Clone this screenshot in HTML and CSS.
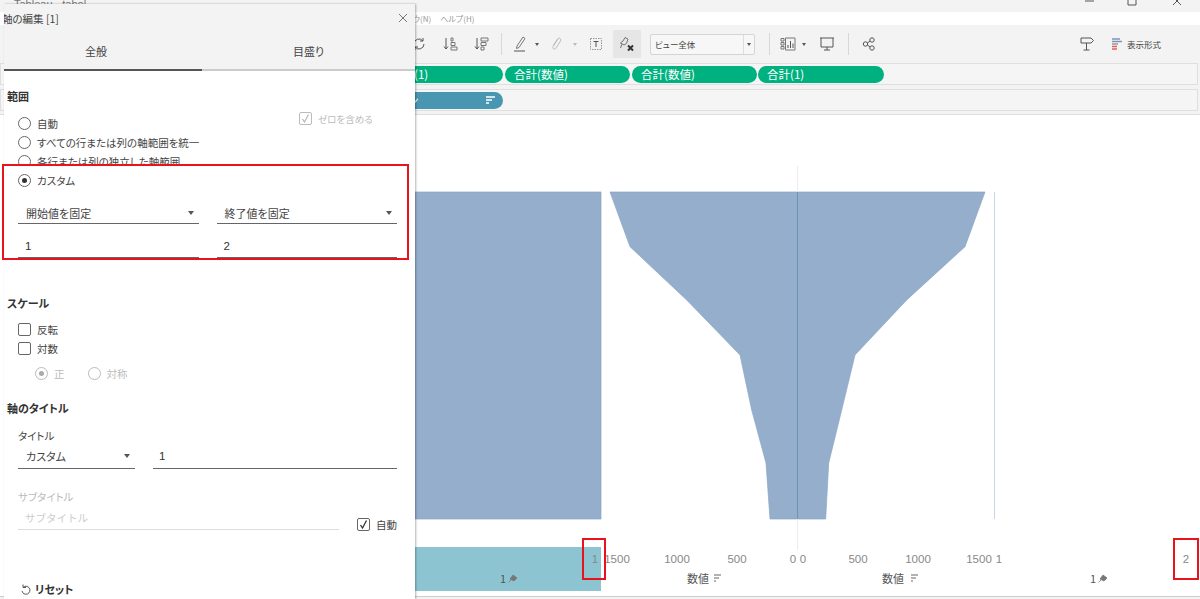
FILE: index.html
```html
<!DOCTYPE html>
<html lang="ja">
<head>
<meta charset="utf-8">
<title>Tableau</title>
<link rel="stylesheet" href="styles.css">
</head>
<body>
<div class="app">
  <div class="titlebar">
    <span class="apptitle">Tableau - tabol</span>
    <div class="winctl">
      <svg width="100" height="12" viewBox="0 0 100 12"><path d="M0 1H9" class="s"/><path d="M43 0V5H51V0M46 0V-2" class="s"/><path d="M88 -3L96 5M96 -3L88 5" class="s"/></svg>
    </div>
  </div>
  <div class="menubar"><span>ウィンドウ(N)</span><span>ヘルプ(H)</span></div>
  <div class="toolbar">
    <div class="t w31"><svg width="16" height="16" viewBox="0 0 16 16"><path d="M3 8A5 5 0 0 1 12 5M13 8A5 5 0 0 1 4 11M12 2V5H9M4 14V11H7" class="s"/></svg></div>
    <div class="t w31"><svg width="16" height="16" viewBox="0 0 16 16"><path d="M4 2V13M2 10.500L4 13L6 10.500" class="s"/><path d="M9 2H11V5H9ZM9 6.500H13V9.500H9ZM9 11H15V14H9Z" class="s thin"/></svg></div>
    <div class="t w31"><svg width="16" height="16" viewBox="0 0 16 16"><path d="M4 2V13M2 10.500L4 13L6 10.500" class="s"/><path d="M8 2H15V5H8ZM8 6.500H13V9.500H8ZM8 11H11V14H8Z" class="s thin"/></svg></div>
    <div class="sep"></div>
    <div class="t w28"><svg width="16" height="18" viewBox="0 0 16 18"><path d="M5 11L11 2L13 3.500L7 12.500L4.500 13.500Z" class="s thin"/><path d="M2 16H13" class="s"/></svg></div>
    <div class="t w6"><span class="caret"></span></div>
    <div class="t w32"><svg width="14" height="16" viewBox="0 0 14 16"><path d="M9 3L4 10.500C3 13 6 14 7 12L11.500 5C12.500 2.500 10 1 8.500 3L4.500 9" class="s faint"/></svg></div>
    <div class="t w6"><span class="caret faintcaret"></span></div>
    <div class="t w35"><svg width="14" height="14" viewBox="0 0 14 14"><rect x="1.500" y="1.500" width="11" height="11" class="s dotted"/><path d="M4.500 4.500H9.500M7 4.500V10" class="s"/></svg></div>
    <div class="t w28 active"><svg width="16" height="16" viewBox="0 0 16 16"><path d="M6 1.500L9 3L7.500 7.500L5 9L1.500 7L4 5ZM3 8L1.500 12" class="s thin"/><path d="M9 9.500L14 14.500M14 9.500L9 14.500" class="s xmark"/></svg></div>
    <div class="viewselect"><span class="vs-text">ビュー全体</span><span class="vs-btn"><span class="caret"></span></span></div>
    <div class="sep"></div>
    <div class="t w27"><svg width="16" height="14" viewBox="0 0 16 14"><path d="M1 1.500H4V4H1ZM1 5.500H4V8H1ZM1 9.500H4V12H1Z" class="s thin"/><path d="M5.500 1H15V13H5.500Z" class="s thin"/><path d="M8 11V8M10.500 11V4M13 11V6.500" class="s"/></svg></div>
    <div class="t w6"><span class="caret"></span></div>
    <div class="t w36"><svg width="16" height="16" viewBox="0 0 16 16"><path d="M1 2H15M2 2V11H14V2M8 11V14M5 14H11" class="s"/></svg></div>
    <div class="sep"></div>
    <div class="t w32"><svg width="14" height="14" viewBox="0 0 14 14"><circle cx="3.500" cy="7" r="2.200" class="s"/><circle cx="10" cy="3" r="2.200" class="s"/><circle cx="10" cy="11" r="2.200" class="s"/><path d="M5.500 6L8 4M5.500 8L8 10" class="s"/></svg></div>
    <div class="grow"></div>
    <div class="t w24"><svg width="16" height="16" viewBox="0 0 16 16"><path d="M2 2H12L14.500 4.500L12 7H2ZM7.500 7V14M4.500 14H10.500" class="s"/></svg></div>
    <div class="fmt">
      <svg width="10" height="12" viewBox="0 0 10 12"><path d="M0 1H8" class="f1"/><path d="M0 3.500H10" class="f1"/><path d="M0 6H6" class="f2"/><path d="M0 8.500H5" class="f3"/><path d="M0 11H5" class="f3"/></svg>
      <span>表示形式</span>
    </div>
  </div>
  <div class="shelf">
    <span class="pill p1">合計(1)</span>
    <span class="pill p2">合計(数値)</span>
    <span class="pill p3">合計(数値)</span>
    <span class="pill p4">合計(1)</span>
  </div>
  <div class="shelf second">
    <span class="pill blue"><span>ン</span>
      <svg width="10" height="9" viewBox="0 0 10 9"><path d="M0 1H9M0 4H6M0 7H3" class="w"/></svg>
    </span>
  </div>
  <div class="view">
    <svg class="chart" width="1200" height="482" viewBox="0 115 1200 482">
      <rect x="415" y="192" width="186" height="327" class="mark"/>
      <path d="M610 192L630 246.700L686.700 300L740 355L751.700 410L766 463L770 519H825.700L828.700 463L841.700 410L855 355L906.700 300L965 246.700L985 192Z" class="mark"/>
      <path d="M797.500 166V550" class="zero"/>
      <path d="M797.500 192V519" class="zerodark"/>
      <path d="M994.500 192V519" class="edge"/>
      <rect x="415" y="547" width="186" height="44" class="band"/>
      <g class="ticks">
        <text x="595" y="563">1</text>
        <text x="617" y="563">1500</text>
        <text x="677" y="563">1000</text>
        <text x="737" y="563">500</text>
        <text x="793" y="563">0</text>
        <text x="803" y="563">0</text>
        <text x="858" y="563">500</text>
        <text x="918" y="563">1000</text>
        <text x="979" y="563">1500</text>
        <text x="999" y="563">1</text>
        <text x="1186" y="563">2</text>
      </g>
      <g class="axt">
        <text x="503" y="583">1</text>
        <text x="698" y="583">数値</text>
        <text x="893" y="583">数値</text>
        <text x="1093" y="583">1</text>
      </g>
      <path d="M513 575L517 578L514 581L510 579ZM511 580L508.500 582.500" class="pin"/>
      <path d="M1103 575L1107 578L1104 581L1100 579ZM1101 580L1098.500 582.500" class="pin"/>
      <path d="M714 575H721M714 578H719M714 581H716" class="sortm"/>
      <path d="M911 575H918M911 578H916M911 581H913" class="sortm"/>
    </svg>
    <div class="redbox rb1"></div>
    <div class="redbox rb2"></div>
  </div>
</div>

<aside class="dialog">
  <div class="dlg-title">
    <span class="dlg-name">軸の編集 [1]</span>
    <svg width="10" height="10" viewBox="0 0 10 10"><path d="M1 1L9 9M9 1L1 9" class="x"/></svg>
  </div>
  <div class="tabs">
    <div class="tab on">全般</div>
    <div class="tab">目盛り</div>
  </div>
  <div class="dlg-body">
    <h3 class="head first">範囲</h3>
    <div class="pad radios">
      <div class="row between">
        <label class="opt"><span class="radio"></span>自動</label>
        <label class="opt off zero-opt"><span class="box"><svg width="11" height="11" viewBox="0 0 11 11"><path d="M2.500 6L4.500 9L8.500 1.500" class="chk g"/></svg></span>ゼロを含める</label>
      </div>
      <label class="opt"><span class="radio"></span>すべての行または列の軸範囲を統一</label>
      <label class="opt"><span class="radio"></span>各行または列の独立した軸範囲</label>
    </div>
    <div class="custom">
      <label class="opt"><span class="radio sel"></span>カスタム</label>
      <div class="fields f1row">
        <div class="select"><span>開始値を固定</span><i class="arrow"></i></div>
        <div class="select"><span>終了値を固定</span><i class="arrow"></i></div>
      </div>
      <div class="fields f2row">
        <div class="input">1</div>
        <div class="input">2</div>
      </div>
    </div>

    <h3 class="head scale">スケール</h3>
    <div class="pad checks">
      <label class="opt"><span class="box"></span>反転</label>
      <label class="opt"><span class="box"></span>対数</label>
    </div>
    <div class="pad logopts">
      <label class="opt off"><span class="radio sel"></span>正</label>
      <label class="opt off"><span class="radio"></span>対称</label>
    </div>

    <h3 class="head axis">軸のタイトル</h3>
    <div class="pad">
      <div class="lab lab1">タイトル</div>
      <div class="titlerow">
        <div class="select small"><span>カスタム</span><i class="arrow"></i></div>
        <div class="input wide">1</div>
      </div>
      <div class="lab lab2 off">サブタイトル</div>
      <div class="subrow">
        <div class="input sub">サブタイトル</div>
        <label class="opt auto"><span class="box"><svg width="11" height="11" viewBox="0 0 11 11"><path d="M2.500 6L4.500 9L8.500 1.500" class="chk"/></svg></span>自動</label>
      </div>
    </div>
    <div class="reset">
      <svg width="10" height="11" viewBox="0 0 10 11"><path d="M2 3.500A4 4 0 1 1 1 7M2 .5V3.500H5" class="s"/></svg>
      <span>リセット</span>
    </div>
  </div>
</aside>
</body>
</html>
```

FILE: styles.css
```css
* { box-sizing: border-box; }
html, body { margin: 0; height: 599px; overflow: hidden; }
body {
  position: relative;
  background: #f3f3f3;
  font-family: "Noto Sans CJK JP", "Noto Sans", sans-serif;
  font-feature-settings: "palt";
  color: #444;
  font-size: 10px;
}
.s { fill: none; stroke: #555; stroke-width: 1; }
.s.thin { stroke: #777; }
.s.faint { stroke: #bbb; }
.s.dotted { stroke: #999; stroke-dasharray: 1.500 1; }
.s.xmark { stroke: #333; stroke-width: 2; }
.w { fill: none; stroke: #fff; stroke-width: 1.300; }

.app { display: flex; flex-direction: column; height: 599px; }
.titlebar { height: 12px; overflow: hidden; display: flex; justify-content: space-between; padding-left: 14px; flex: none; }
.apptitle { font: 11px/8px "Liberation Sans", sans-serif; color: #777; }
.winctl { margin-right: 15px; }
.menubar { height: 13px; flex: none; background: #fff; display: flex; gap: 9px; padding-left: 386px; font-size: 8px; line-height: 13px; color: #999; }
.toolbar { height: 38px; flex: none; display: flex; align-items: center; padding: 0 39px 0 403px; }
.t { height: 28px; display: flex; align-items: center; justify-content: center; flex: none; }
.w6 { width: 6px; } .w24 { width: 24px; } .w27 { width: 27px; } .w28 { width: 28px; }
.w31 { width: 31px; } .w32 { width: 32px; } .w35 { width: 35px; } .w36 { width: 36px; padding-left: 4px; }
.active { background: #e6e6e6; }
.caret { width: 0; height: 0; border: 2.500px solid transparent; border-top: 3px solid #555; border-bottom: 0; }
.faintcaret { border-top-color: #bbb; }
.sep { width: 1px; height: 22px; background: #d8d8d8; margin: 0 4px 0 5px; flex: none; }
.viewselect { width: 105px; height: 21px; margin-left: 9px; margin-right: 9px; display: flex; background: #f7f7f7; border: 1px solid #d4d4d4; border-radius: 2px; flex: none; }
.vs-text { flex: 1; padding-left: 4px; font-size: 8.500px; line-height: 19px; color: #444; }
.vs-btn { width: 11px; border-left: 1px solid #ddd; display: flex; align-items: center; justify-content: center; }
.grow { flex: 1; }
.fmt { display: flex; align-items: center; gap: 5px; margin-left: 13px; font-size: 8.500px; color: #444; }
.f1 { stroke: #7c93b8; stroke-width: 1.500; }
.f2 { stroke: #999; stroke-width: 1.500; }
.f3 { stroke: #e0605a; stroke-width: 1.500; }

.shelf { height: 22px; flex: none; margin: 0 2px 4px 0; background: #f5f5f5; border: 1px solid #dfdfdf; display: flex; align-items: center; gap: 2px; padding-left: 300px; }
.second { margin-bottom: 3px; }
.pill { height: 17px; border-radius: 9px; background: #00b180; color: #fff; font-size: 11.500px; line-height: 17px; padding-left: 9px; flex: none; }
.p1 { width: 202px; padding-left: 90px; }
.p2 { width: 125px; }
.p3 { width: 125px; }
.p4 { width: 126px; margin-left: -1px; }
.blue { width: 202px; background: #4996b2; display: flex; justify-content: space-between; align-items: center; padding: 0 7px 0 107px; }

.view { position: relative; flex: none; height: 483px; background: #fff; border-top: 1px solid #dfdfdf; border-bottom: 1px solid #ccc; }
.chart { display: block; }
.mark { fill: #94aecb; stroke: #8ba7c6; stroke-width: .7; }
.zero { stroke: #ececec; stroke-width: 1; }
.zerodark { stroke: #7094b8; stroke-width: 1; }
.edge { stroke: #c5d7e6; stroke-width: 1; }
.band { fill: #8cc4d2; }
.ticks text { font: 11.500px "Liberation Sans", sans-serif; fill: #888; text-anchor: middle; }
.axt text { font: 11px "Noto Sans CJK JP", sans-serif; fill: #555; text-anchor: middle; }
.pin { fill: #777; stroke: #777; stroke-width: .8; }
.sortm { stroke: #666; stroke-width: 1; fill: none; }
.redbox { position: absolute; border: 2px solid #e8141c; }
.rb1 { left: 582px; top: 423px; width: 24px; height: 42px; }
.rb2 { left: 1173px; top: 423px; width: 26px; height: 42px; }

.dialog { position: absolute; left: 4px; top: 4px; width: 411px; height: 595px; background: #fff; box-shadow: 1px 0 2px rgba(0,0,0,.3); }
.dlg-title { height: 28px; background: #f3f3f3; display: flex; justify-content: space-between; align-items: center; padding-right: 7px; overflow: hidden; }
.dlg-name { font-size: 10.500px; margin-left: -2px; color: #444; }
.x { stroke: #777; stroke-width: 1; fill: none; }
.tabs { display: flex; height: 39px; background: #f3f3f3; }
.tab { width: 213px; border-bottom: 2px solid #ccc; text-align: center; padding-top: 11px; font-size: 11px; line-height: 16px; color: #444; }
.tab.on { width: 198px; border-bottom: 2px solid #555; padding-right: 14px; }
.dlg-body { padding-top: 17px; }
.head { margin: 0; height: 16px; padding-left: 3px; font-size: 11px; line-height: 16px; font-weight: 700; color: #333; }
.pad { padding: 0 18px 0 14px; }
.radios { margin-top: 10px; }
.opt { display: flex; align-items: center; height: 19px; gap: 6px; font-size: 10.500px; color: #444; }
.row.between { display: flex; justify-content: space-between; }
.radio { width: 13px; height: 13px; border: 1px solid #666; border-radius: 50%; flex: none; display: flex; align-items: center; justify-content: center; background: #fff; }
.radio.sel::after { content: ""; width: 5px; height: 5px; border-radius: 50%; background: #333; }
.box { width: 13px; height: 13px; border: 1px solid #666; border-radius: 2px; flex: none; display: flex; align-items: center; justify-content: center; background: #fff; }
.chk { fill: none; stroke: #333; stroke-width: 1.300; }
.chk.g { stroke: #bbb; }
.off { color: #bbb; }
.off .radio, .off .box { border-color: #bbb; }
.off .radio.sel::after { background: #aaa; }
.zero-opt { margin-top: -5px; margin-right: 6px; width: 92px; font-size: 9.500px; }
.custom { position: relative; margin: -7px 6px 0 -2px; padding: 5px 10px 0 14px; border: 2px solid #e8141c; background: #fff; }
.fields { display: flex; gap: 18px; }
.f1row { margin-top: 14px; }
.f2row { margin-top: 13px; }
.select { flex: 1; height: 20px; border-bottom: 1px solid #666; display: flex; justify-content: space-between; align-items: center; padding: 0 5px 2px 8px; font-size: 11px; color: #444; }
.arrow { width: 0; height: 0; border: 3.500px solid transparent; border-top: 4px solid #555; border-bottom: 0; }
.input { flex: 1; height: 21px; border-bottom: 1px solid #666; padding-left: 7px; font: 11.500px/18px "Liberation Sans", sans-serif; color: #333; }
.scale { margin-top: 35px; }
.checks { margin-top: 9px; }
.logopts { display: flex; gap: 23px; padding-left: 31px; margin-top: 6px; }
.axis { margin-top: 17px; }
.lab { height: 16px; font-size: 10.500px; line-height: 16px; color: #444; }
.lab1 { margin-top: 12px; }
.titlerow { display: flex; gap: 18px; margin-top: 2px; }
.select.small { flex: none; width: 117px; height: 23px; }
.wide { flex: 1; height: 23px; padding-left: 6px; line-height: 20px; }
.lab2 { margin-top: 20px; color: #bbb; }
.subrow { display: flex; gap: 18px; margin-top: 3px; }
.sub { flex: none; width: 321px; height: 22px; border-bottom-color: #ddd; color: #ccc; font: 10.500px/20px "Noto Sans CJK JP", sans-serif; }
.auto { align-self: flex-end; margin-bottom: -4px; }
.reset { display: flex; align-items: center; gap: 4px; margin-top: 51px; padding-left: 17px; height: 16px; font-size: 11px; font-weight: 700; color: #333; }
```
